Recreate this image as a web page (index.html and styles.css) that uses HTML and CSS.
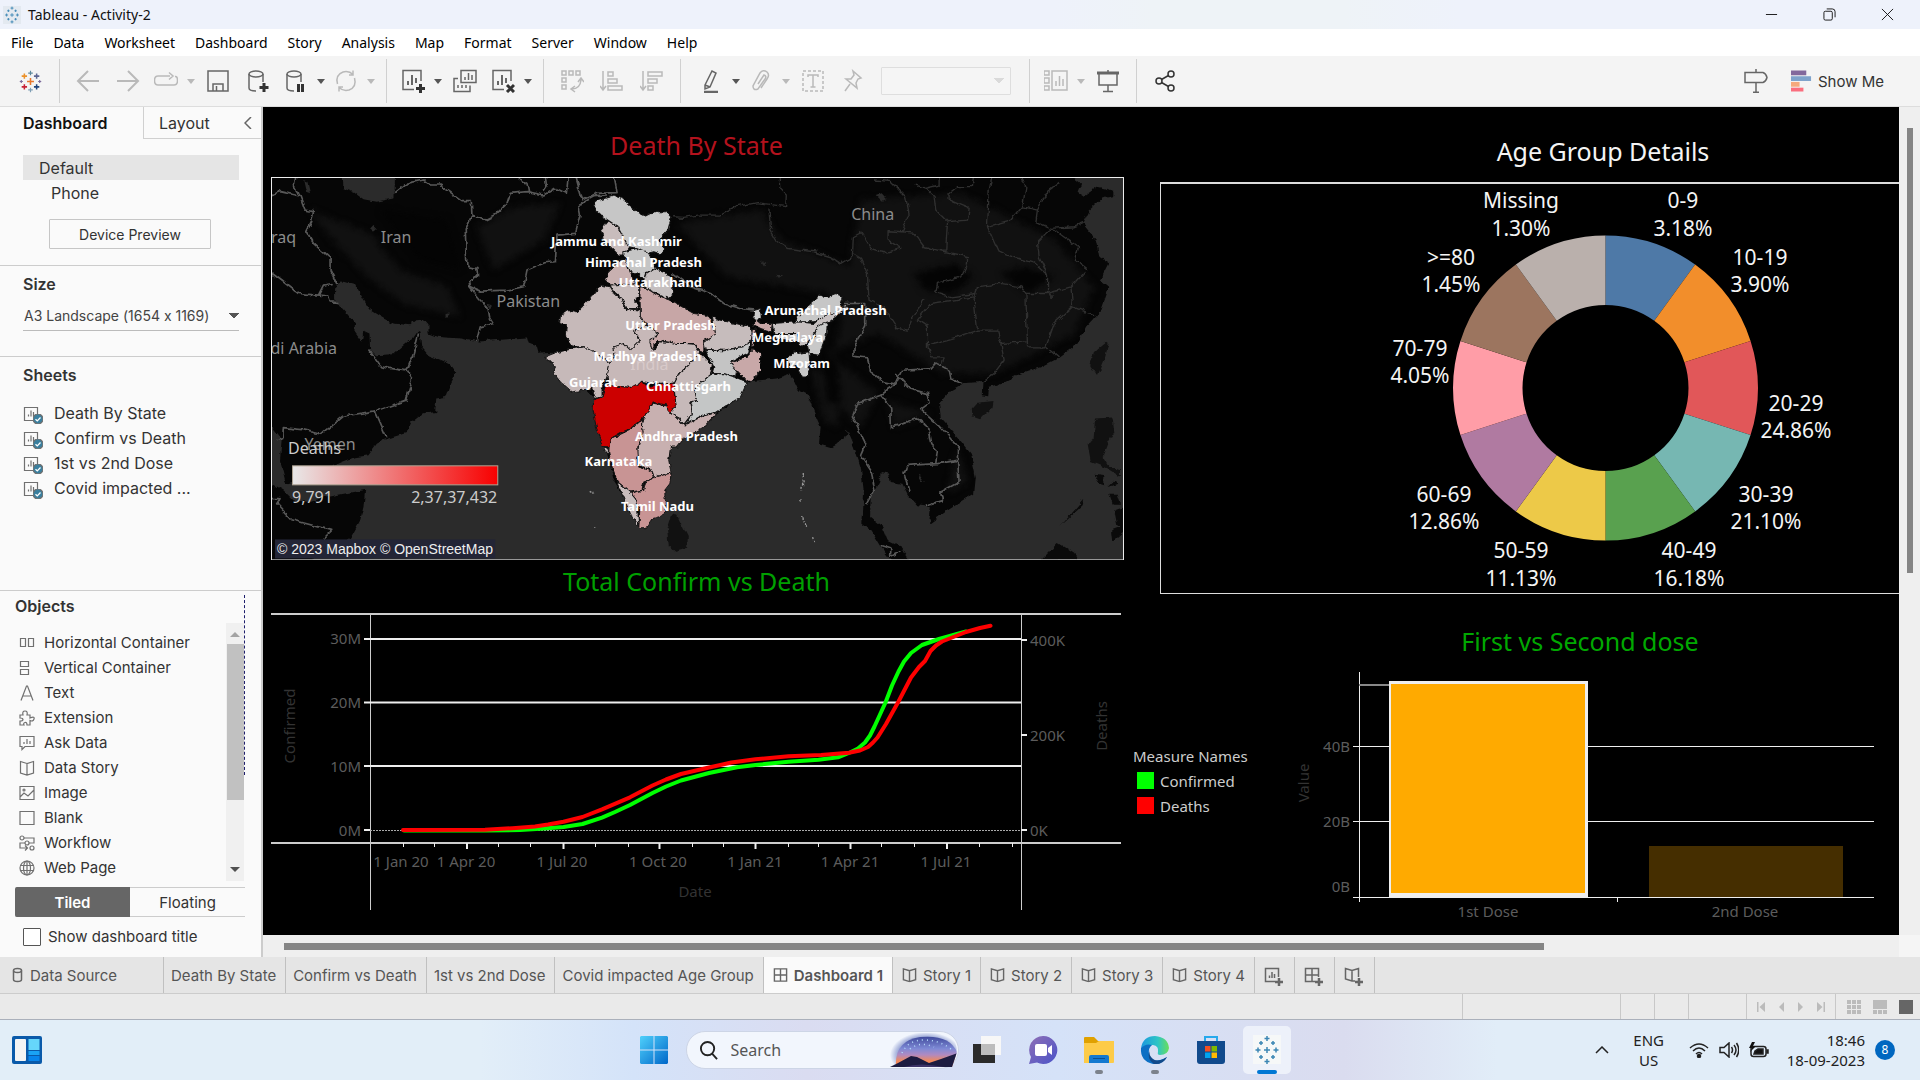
FILE: index.html
```html
<!DOCTYPE html>
<html lang="en">
<head>
<meta charset="utf-8">
<title>Tableau - Activity-2</title>
<link rel="stylesheet" href="styles.css">
</head>
<body>
<svg class="defs" aria-hidden="true">
  <defs>
    <symbol id="plusmark" viewBox="0 0 30 30"><path d="M15 12v6M12 15h6M15 1v5M12.500 3.500h5M15 24v5M12.500 26.500h5M6 12.500v5M3.500 15h5M24 12.500v5M21.500 15h5M9 6v4M7 8h4M21 6v4M19 8h4M9 20v4M7 22h4M21 20v4M19 22h4"/></symbol>
    <symbol id="book" viewBox="0 0 16 16"><path d="M8 3.500v11M8 3.500L1.500 1.500v11.500L8 15l6.500-2V1.500z"/></symbol>
    <symbol id="check" viewBox="0 0 10 10"><circle cx="5" cy="5" r="5" fill="#3a7f9e"/><path d="M2.500 5.200l1.800 1.700L7.500 3.500" fill="none" stroke="#fff" stroke-width="1.300"/></symbol>
  </defs>
</svg>

<header class="titlebar">
  <svg class="app-logo" viewBox="0 0 30 30"><rect width="30" height="30" fill="#e3e9f0"/><use href="#plusmark"/></svg>
  <h1>Tableau - Activity-2</h1>
  <div class="window-buttons">
    <button aria-label="Minimize"><svg viewBox="0 0 14 14"><path d="M1 7h12"/></svg></button>
    <button aria-label="Restore"><svg viewBox="0 0 14 14"><rect x="1" y="3.500" width="9" height="9.500" rx="1.500"/><path d="M4 1h6q3 0 3 3v6"/></svg></button>
    <button aria-label="Close"><svg viewBox="0 0 14 14"><path d="M1 1l12 12M13 1L1 13"/></svg></button>
  </div>
</header>

<nav class="menubar">
  <button>File</button><button>Data</button><button>Worksheet</button><button>Dashboard</button><button>Story</button><button>Analysis</button><button>Map</button><button>Format</button><button>Server</button><button>Window</button><button>Help</button>
</nav>

<div class="toolbar">
  <div class="tools home">
    <button aria-label="Start page"><svg class="color-logo" viewBox="0 0 30 30"><path stroke="#e8762c" stroke-width="2" d="M15 10.500v9M10.500 15h9"/><path stroke="#5b879b" d="M15 1v6M12 4h6"/><path stroke="#7f9fb5" d="M15 23v6M12 26h6"/><path stroke="#eb9129" stroke-width="2" d="M7 4.500v7M3.500 8h7"/><path stroke="#5c6692" stroke-width="2" d="M23 4.500v7M19.500 8h7"/><path stroke="#c72035" stroke-width="2" d="M7 18.500v7M3.500 22h7"/><path stroke="#1f447e" stroke-width="2" d="M23 18.500v7M19.500 22h7"/><path stroke="#7b6a9b" d="M3 13v4M1 15h4M27 13v4M25 15h4"/></svg></button>
  </div>
  <div class="tools">
    <button class="off" aria-label="Undo"><svg viewBox="0 0 24 24"><path stroke-width="2" d="M23 12H3M12 2L2 12l10 10"/></svg></button>
    <button class="off" aria-label="Redo"><svg viewBox="0 0 24 24"><path stroke-width="2" d="M1 12h20M12 2l10 10-10 10"/></svg></button>
    <button class="off drop" aria-label="Replay"><svg viewBox="0 0 24 24"><path d="M16 7H4q-3.500 0-3.500 4.500T4 16h16q3.500 0 3.500-4.500T21 7.500M15 3.500L19 7l-4 3.500"/></svg></button>
    <button aria-label="Save"><svg viewBox="0 0 24 24"><path stroke-width="1.500" d="M2 2h20v20H2zM7 22v-7h10v7M10.500 17v5"/></svg></button>
    <button aria-label="New data source"><svg viewBox="0 0 24 24"><ellipse cx="10" cy="5" rx="7" ry="3"/><path d="M3 5v14q0 3 7 3M17 5v8"/><path class="bold" d="M18 14v9M13.500 18.500h9"/></svg></button>
    <button class="drop" aria-label="Pause updates"><svg viewBox="0 0 24 24"><ellipse cx="10" cy="5" rx="7" ry="3"/><path d="M3 5v14q0 3 7 3M17 5v8"/><path class="bold" d="M14.500 15v8M18.500 15v8"/></svg></button>
    <button class="off drop" aria-label="Refresh"><svg viewBox="0 0 24 24"><path d="M3.500 15Q1 6 9 3q6-1.500 10 2.500M20.500 9q2.500 9-5.500 12-6 1.500-10-2.500M19 1.500v4.500h-4M5 22.500V18h4"/></svg></button>
  </div>
  <div class="tools">
    <button class="drop" aria-label="New worksheet"><svg viewBox="0 0 24 24"><path d="M13 20.500H2v-19h18V12"/><path stroke-width="2" d="M7 16v-4M11 16V6M15 14V9"/><path class="bold" d="M19.500 15v9M15 19.500h9"/></svg></button>
    <button aria-label="Duplicate"><svg viewBox="0 0 24 24"><path d="M8 1.500h15v12H8zM5 9.500H1v13h16v-6"/><path d="M12 11V8M15.500 11V4M19 11V6M5 19v-3M9 19v-3M13 19v-3"/></svg></button>
    <button class="drop" aria-label="Clear sheet"><svg viewBox="0 0 24 24"><path d="M13 20.500H2v-19h18V12"/><path stroke-width="2" d="M7 16v-4M11 16V6M15 14V9"/><path class="bold" d="M16 16l7 7M23 16l-7 7"/></svg></button>
  </div>
  <div class="tools">
    <button class="off" aria-label="Swap"><svg viewBox="0 0 24 24"><path d="M2 2h4v4H2zM9 2h4v4H9zM16 2h4v4h-4zM2 9h4v4H2zM2 16h4v4H2zM12 20q8 0 9-9M15 17l-4 3 4 3M18 13l3-4 3 4"/></svg></button>
    <button class="off" aria-label="Sort ascending"><svg viewBox="0 0 24 24"><path d="M3 2v19M0 17l3 4 3-4M8 3h5v4H8zM8 10h9v4H8zM8 17h14v4H8z"/></svg></button>
    <button class="off" aria-label="Sort descending"><svg viewBox="0 0 24 24"><path d="M3 2v19M0 17l3 4 3-4M8 3h14v4H8zM8 10h9v4H8zM8 17h5v4H8z"/></svg></button>
  </div>
  <div class="tools wide">
    <button class="drop" aria-label="Highlight"><svg viewBox="0 0 24 24"><path d="M6 16L13 2l4 2-6 14-5 2zM6 16l5 2"/><path stroke-width="2.500" d="M5 23h14"/></svg></button>
    <button class="off drop" aria-label="Group"><svg viewBox="0 0 24 24"><path d="M9 15l6-9q3 1 1 4l-7 10q-5 2-5-3L11 4q3-4 7-1 3 3 0 7l-6 9"/></svg></button>
    <button class="off" aria-label="Labels"><svg viewBox="0 0 24 24"><path stroke-dasharray="3 2" d="M2 2h20v20H2z"/><path d="M7 8V6h10v2M12 6v12M9.500 18h5"/></svg></button>
    <button class="off" aria-label="Fix axes"><svg viewBox="0 0 24 24"><path d="M12 2l8 7-3 1-2 4 1 5L5 10l5 0 3-4zM9 15l-5 7"/></svg></button>
    <select aria-label="Fit" disabled><option></option></select>
  </div>
  <div class="tools">
    <button class="off drop" aria-label="Show cards"><svg viewBox="0 0 24 24"><path d="M0 2h5v4H0zM0 9h5v5H0zM0 17h5v4H0zM8 2h15v19H8zM12 17v-5M15.500 17V7M19 17v-7"/></svg></button>
    <button aria-label="Presentation mode"><svg viewBox="0 0 24 24"><path stroke-width="3" d="M1 4h22"/><path stroke-width="1.500" d="M3 5v11h18V5M12 16v6M12 1v2M7 22.500h10"/></svg></button>
  </div>
  <div class="tools">
    <button class="strong" aria-label="Share"><svg viewBox="0 0 24 24"><circle cx="6" cy="12" r="3"/><circle cx="18" cy="5" r="3"/><circle cx="18" cy="19" r="3"/><path d="M8.500 10.500l7-4M8.500 13.500l7 4"/></svg></button>
  </div>
  <div class="tools end">
    <button aria-label="Guide"><svg viewBox="0 0 24 24"><path stroke-width="1.500" d="M1 3.500h18q3 1 4 5-1 4-4 5H1zM12 0v3M12 14v9M9 23.200h6"/></svg></button>
    <button class="showme"><svg viewBox="0 0 22 24"><path fill="#83699c" d="M0 1h16v5H0z"/><path fill="#7fa3cb" d="M0 7h21v5H0z"/><path fill="#f5a97d" d="M0 13h9v5H0z"/><path fill="#fa6e7e" d="M0 19h13v4H0z"/></svg>Show Me</button>
  </div>
</div>

<main>
  <aside>
    <div class="pane-tabs">
      <button class="on">Dashboard</button>
      <button>Layout<svg viewBox="0 0 8 12"><path d="M7 0L1 6l6 6"/></svg></button>
    </div>
    <section class="devices">
      <button class="device on">Default</button>
      <button class="device sub">Phone</button>
      <button class="preview">Device Preview</button>
    </section>
    <section class="size">
      <h2><label for="size">Size</label></h2>
      <div class="picker"><select id="size"><option>A3 Landscape (1654 x 1169)</option></select></div>
    </section>
    <section class="sheets">
      <h2>Sheets</h2>
      <ul>
        <li><svg viewBox="0 0 20 18"><path d="M11 14.500H1.500v-13h13V9M5.500 10.500v-2M8 10.500V4.500M10.500 10.500V6"/><use href="#check" x="10" y="8" width="10" height="10"/></svg>Death By State</li>
        <li><svg viewBox="0 0 20 18"><path d="M11 14.500H1.500v-13h13V9M5.500 10.500v-2M8 10.500V4.500M10.500 10.500V6"/><use href="#check" x="10" y="8" width="10" height="10"/></svg>Confirm vs Death</li>
        <li><svg viewBox="0 0 20 18"><path d="M11 14.500H1.500v-13h13V9M5.500 10.500v-2M8 10.500V4.500M10.500 10.500V6"/><use href="#check" x="10" y="8" width="10" height="10"/></svg>1st vs 2nd Dose</li>
        <li><svg viewBox="0 0 20 18"><path d="M11 14.500H1.500v-13h13V9M5.500 10.500v-2M8 10.500V4.500M10.500 10.500V6"/><use href="#check" x="10" y="8" width="10" height="10"/></svg>Covid impacted ...</li>
      </ul>
    </section>
    <section class="objects">
      <h2>Objects</h2>
      <div class="object-list">
        <ul>
          <li><svg viewBox="0 0 16 16"><path d="M1.500 3.500h5v8h-5zM9.500 3.500h5v8h-5z"/></svg>Horizontal Container</li>
          <li><svg viewBox="0 0 16 16"><path d="M1.500 1.500h8v5h-8zM1.500 9.500h8v5h-8z"/></svg>Vertical Container</li>
          <li><svg viewBox="0 0 16 16"><path d="M2 15.500L7.500 1h1L14 15.500M4 11h8"/></svg>Text</li>
          <li><svg viewBox="0 0 16 16"><path d="M1 5h3q-1-4 2-4t2 4h3v3q5-2 4 1t-4 1.500V15H8q0-3-2-2.500T5 15H1v-4q3 0 3-1.500T1 8z"/></svg>Extension</li>
          <li><svg viewBox="0 0 16 16"><path d="M1 1.500h14v10H6l-3 3v-3H1zM5 9V7M8 9V4M11 9V6"/></svg>Ask Data</li>
          <li><svg viewBox="0 0 16 16"><use href="#book"/></svg>Data Story</li>
          <li><svg viewBox="0 0 16 16"><path d="M1 1.500h14v13H1zM1 12l4-4 4 3 6-6"/><circle cx="5" cy="5" r="1"/></svg>Image</li>
          <li><svg viewBox="0 0 16 16"><path d="M1 1.500h14v13H1z"/></svg>Blank</li>
          <li><svg viewBox="0 0 16 16"><circle cx="3" cy="3" r="2"/><circle cx="8" cy="8" r="2"/><circle cx="13" cy="13" r="2"/><path d="M5 3h10v5h-5M6 8H1v5h7M6 10.500l2.500 2.500L6 15.500"/></svg>Workflow</li>
          <li><svg viewBox="0 0 16 16"><circle cx="8" cy="8" r="7"/><ellipse cx="8" cy="8" rx="3.500" ry="7"/><path d="M8 1v14M1.500 5.500h13M1.500 10.500h13"/></svg>Web Page</li>
        </ul>
        <div class="list-scroll"><svg viewBox="0 0 10 5"><path fill="#a3a3a3" d="M0 5l5-5 5 5z"/></svg><div class="list-thumb"></div><svg viewBox="0 0 10 5"><path fill="#505050" d="M0 0l5 5 5-5z"/></svg></div>
        <div class="outline"></div>
      </div>
      <div class="mode"><button class="on">Tiled</button><button>Floating</button></div>
      <div class="show-title"><input type="checkbox" id="show-title"><label for="show-title">Show dashboard title</label></div>
    </section>
  </aside>

  <div class="workspace">
    <div class="canvas">
      <div class="column left">
        <h2 class="map-title">Death By State</h2>
        <svg class="map" viewBox="271 177 852 383">
          <defs>
            <filter id="rough" x="0" y="0" width="1" height="1" color-interpolation-filters="sRGB"><feTurbulence type="fractalNoise" baseFrequency="0.04" numOctaves="3" seed="4"/><feDisplacementMap in="SourceGraphic" scale="16" xChannelSelector="R" yChannelSelector="G"/></filter>
            <filter id="rough-fine" x="-0.05" y="-0.05" width="1.100" height="1.100" color-interpolation-filters="sRGB"><feTurbulence type="fractalNoise" baseFrequency="0.070" numOctaves="3" seed="8"/><feDisplacementMap in="SourceGraphic" scale="14" xChannelSelector="R" yChannelSelector="G"/></filter>
            <filter id="haze" color-interpolation-filters="sRGB"><feGaussianBlur stdDeviation="10"/></filter>
            <linearGradient id="deaths"><stop offset="0" stop-color="#e8e8e8"/><stop offset="1" stop-color="#f80000"/></linearGradient>
          </defs>
          <svg x="271" y="177" width="852" height="383" viewBox="33 51 2556 1149">
            <rect x="33" y="51" width="2556" height="1149" fill="#2b2b2b"/>
            <g filter="url(#rough)">
              <rect x="13" y="31" width="2596" height="1189" fill="none"/>
              <path fill="#060606" d="M20 30L20 780 65 840 60 900 78 970 150 950 243 905 275 893 325 885 350 850 372 838 438 818 450 790 485 762 525 755 528 715 555 710 570 670 588 635 570 612 550 602 505 585 483 560 478 515 472 512 460 530 430 555 400 582 345 585 330 570 328 520 310 512 305 545 283 515 285 490 260 460 225 420 225 385 250 362 285 372 310 418 330 450 370 475 400 490 450 495 470 480 490 478 505 495 505 520 530 530 600 535 645 545 700 540 800 532 805 550 830 560 835 578 870 575 1000 715 1060 960 1145 1095 1205 1050 1228 870 1300 800 1400 740 1445 665 1545 655 1590 640 1610 685 1640 700 1660 755 1680 800 1675 850 1710 860 1752 835 1758 810 1780 860 1800 920 1810 1000 1805 1090 1830 1110 1860 1160 1900 1210 1955 1210 1920 1160 1880 1140 1865 1100 1828 1070 1830 1010 1855 970 1860 935 1885 940 1890 965 1925 970 1940 1000 1970 1035 2010 1040 2005 1090 2060 1050 2100 1025 2140 1000 2145 950 2130 880 2090 830 2040 775 2035 730 2070 690 2110 668 2165 665 2163 705 2182 708 2185 680 2230 665 2280 640 2340 620 2390 595 2450 550 2475 500 2520 450 2545 380 2520 360 2545 310 2515 290 2505 240 2465 190 2485 150 2525 115 2560 108 2560 92 2510 80 2470 108 2450 95 2460 70 2410 30z"/>
              <path fill="#060606" d="M20 960L70 990 100 1020 150 1025 200 1010 315 988 310 1040 300 1080 270 1135 130 1215 20 1215z"/>
              <path fill="#111" filter="url(#haze)" d="M150 150L330 220 420 330 560 380 600 470 430 430 320 350 200 220zM650 200L760 140 900 130 850 240 700 330zM1250 190L1500 150 1560 240 1800 330 1830 480 1700 400 1400 350zM1800 120L2100 100 2380 240 2500 380 2440 520 2200 640 2050 640 1850 520 1700 580 1850 700 1800 800 1700 700 1720 600zM1650 620L1740 660 1730 800 1690 780zM1880 720L2010 760 1900 800zM2090 860L2120 960 2060 1000z"/>
              <path fill="#040404" filter="url(#haze)" d="M1960 340L2080 310 2140 350 2080 400 1990 390zM2220 340L2300 320 2380 350 2300 400zM360 150L560 180 600 330 480 300zM1690 600l40 10 10 120-40 0z"/>
              <path fill="#111" d="M1235 1062L1250 1065 1282 1130 1280 1165 1245 1175 1225 1155 1220 1110zM2130 745L2145 728 2198 722 2195 740 2160 778 2132 768zM2535 545L2543 550 2530 600 2510 650 2488 615 2500 575zM2502 775L2555 772 2560 815 2540 850 2525 890 2540 915 2580 930 2580 950 2540 925 2490 905 2480 850 2498 840z"/>
              <path fill="#0a0a0a" d="M2470 1015L2465 1035 2398 1098 2440 1050zM2340 1200L2390 1148 2440 1180 2450 1200zM2500 940l30 5 0 30-15-5zM2545 1000l25 0 10 30-25 0zM2560 1050l29-10v60l-20-5zM2550 1110l39-15v20l-35 30zM2540 980l20 -20 10 10z"/>
              <path fill="#2b2b2b" d="M247 30H405L403 115 350 125 310 118 280 95 250 85zM130 60l12 5 8 35-12-5zM330 205l10-10 10 10-10 8zM556 460l12-4-2 16-10 0zM680 430l18 5-10 10zM1845 105l15-5 18 20-12 5zM1500 300l10 8 8 0-8 8zM1548 342l20 0-16 10zM2360 395l12 10 8 0-8 15-10-12zM1970 940l8 4 14 20-6 0z"/>
              <g class="borders">
                <path d="M105 40L100 75 115 95 135 150 160 155 155 185 140 215 160 250 210 295 210 330 232 375M30 105L60 95 118 108M30 335L115 400 175 405 190 375 218 370M175 405L205 408 210 425 235 427M405 98L440 70 490 60 510 75 540 75 575 100 605 122 633 122 635 165 615 210 620 318 650 325 652 345 625 378 660 393 740 390 790 380 800 330 850 308 885 305 890 225 945 220 960 160 955 135 1000 110 1040 108M635 165L675 180 705 165 740 130 750 100 800 95 850 105 885 85 918 100 925 40M765 45L800 70 805 95M855 45L858 75 845 95M945 45L965 120 1010 100 1070 98 1060 45M625 378L655 415 680 440 685 470 697 490 660 500 648 545M325 568L362 620 440 632 458 655 438 720 345 752 250 768 185 822 125 808 70 802 68 835 50 840M345 752L380 832M440 632L460 580 475 520M30 1015L60 1015 50 1030 95 1078 215 1110 190 1135"/>
                <g transform="translate(1140)">
                  <path d="M610 430L675 430 675 500 640 560 640 585 680 590 690 635 730 665 765 672 785 630 870 625 885 608 925 630 930 655 965 668M765 640L805 685 860 700 868 725 840 745 900 800 950 860 950 900 890 910 800 915 790 940 805 995M765 672L720 705 650 730 635 770 660 820 675 850 660 885 690 930 702 985 675 1035M720 705L750 740 752 800 790 790 830 775 860 800 870 850 890 870 885 910M950 900L955 965 900 995 905 1020 855 1035M720 1155L750 1165 750 1185 780 1170M95 340L150 380 210 400 250 430 300 445 345 450"/>
                  <path class="province" d="M415 45L418 85 437 105 435 140 350 128 290 140 240 165 170 165 130 172 95 170M385 145L390 210 410 245 440 265 520 275 570 290 600 310 635 290 638 230 660 218 690 265 730 278 780 265 742 240 742 212 785 215 805 160 795 110 750 65 700 60M635 280L660 295 680 340 685 420 730 445 770 505 800 510 815 470 850 420M785 215L820 220 850 260 890 270 915 270 920 185 885 150 880 110 855 85 825 75M855 85L895 75 895 45M920 185L980 180 985 145 925 120 925 100 950 80 995 80 998 45M1055 45L1045 90 1040 200 1070 270 1100 285 1180 310 1220 345 1220 400 1155 400 1140 380 1080 370 1010 380 1005 400 930 410 885 395 890 370 960 350 980 310 980 290 890 270M1040 200L1110 180 1145 140 1155 80 1140 45M1145 140L1190 150 1215 100 1255 70M1190 150L1185 185 1230 205 1300 200 1325 190M1230 205L1190 245 1195 290 1220 345M1240 210L1310 260 1300 300 1340 330M1220 400L1290 380 1330 335M1290 380L1295 440 1360 465M1295 440L1240 490 1215 560 1250 590M1155 400L1160 560 1215 560M1010 380L1000 420 1010 510 1070 510 1080 550 1155 545M1010 510L950 530 860 555 860 500 830 480 870 430 1000 410M860 555L870 590 910 590 905 610M1080 550L1090 600 1060 640 1025 665"/>
                </g>
              </g>
              <path class="isles" d="M1628 935v20M1628 960l-5 30M1618 1020v8M1626 1070l12 30M1656 1130l4 15M988 990l16 10M1004 1100h4"/>
            </g>
            <g class="states" filter="url(#rough-fine)" transform="translate(810 60)">
              <path fill="#c8bcbc" d="M235 122L212 150 220 180 240 200 265 225 280 225 295 200 262 140z"/>
              <path fill="#c6c6c6" d="M187 75L200 62 250 48 275 55 320 95 345 108 370 95 410 95 423 110 412 150 385 180 400 210 390 222 370 215 350 220 320 205 295 200 275 165 262 140 235 122 210 105 195 92z"/>
              <path fill="#c5c5c5" d="M280 215L320 205 350 215 370 245 375 270 345 280 340 300 320 280 285 270z"/>
              <path fill="#c8b0b0" d="M235 275L270 240 285 240 300 275 310 300 320 315 240 315 225 305z"/>
              <path fill="#c5bfbf" d="M345 285L375 265 400 275 430 300 425 345 415 355 345 325 340 300z"/>
              <path fill="#c7bbbb" d="M240 315L325 310 325 345 315 360 325 385 290 385 270 350 245 330z"/>
              <path fill="#c6b9b9" d="M210 315L240 320 255 345 275 355 285 385 330 390 335 410 345 435 310 455 330 480 320 510 290 520 280 495 250 500 255 530 240 550 195 520 165 500 130 500 105 465 108 435 88 430 90 405 115 388 140 395 180 355z"/>
              <path fill="#c6b9b9" d="M45 530L75 518 130 505 165 500 200 520 240 550 230 590 215 620 215 650 195 655 185 625 125 635 90 605 70 580 75 560z"/>
              <path fill="#c7b8b8" d="M250 500L280 490 300 510 330 480 310 455 345 435 385 460 360 490 370 510 385 485 440 488 490 492 505 515 480 550 445 580 430 610 390 612 330 603 315 622 235 618 230 590 240 545 255 530z"/>
              <path fill="#c7a6a6" d="M328 320L345 322 380 345 420 360 490 400 530 405 545 425 558 465 520 480 520 520 505 510 490 490 440 490 380 480 365 510 358 485 385 460 350 435 330 410z"/>
              <path fill="#c6bcbc" d="M545 405L560 418 660 440 670 465 655 490 630 500 580 510 525 508 520 485 555 462z"/>
              <path fill="#c4c4c4" d="M525 510L580 512 635 500 658 485 655 515 600 545 620 560 615 590 575 580 545 580 550 560z"/>
              <path fill="#c8a8a8" d="M655 520L670 505 690 520 690 570 660 605 635 590 610 565 600 548 640 535zM672 415L690 430 725 430 722 455 690 445 672 435zM665 445l10 0-8 55-5 0z"/>
              <path fill="#ccc" d="M672 390L690 385 692 415 670 418z"/>
              <path fill="#c4c6c6" d="M540 583L575 580 610 590 650 605 630 650 590 675 560 695 515 705 480 725 465 730 485 700 480 670 498 660 490 630 520 600z"/>
              <path fill="#c6b9b9" d="M505 515L545 555 540 583 520 600 490 630 498 660 478 665 485 700 460 732 440 710 418 695 435 660 430 610 445 580 480 550z"/>
              <path fill="#c8b0b0" d="M365 668L410 677 418 695 440 712 462 735 515 708 560 697 520 740 460 775 440 800 420 800 415 840 422 878 370 890 365 870 325 855 320 820 330 770 340 715z"/>
              <path fill="#c89494" d="M335 718L338 760 322 800 325 860 365 872 370 895 340 905 335 930 300 935 262 905 245 860 235 820 237 778 300 748z"/>
              <path fill="#c00" d="M190 658L215 650 225 615 300 622 335 603 350 618 430 608 432 645 438 680 425 685 422 700 412 690 410 675 365 665 350 700 335 715 300 745 275 755 240 775 235 800 215 798 200 750 188 690z"/>
              <path fill="#c8bcbc" d="M258 903L300 935 320 960 325 1040 300 1000zM222 803L235 803 232 825z"/>
              <path fill="#c89494" d="M300 938L340 930 345 905 375 890 422 878 418 910 403 930 405 980 400 1005 365 1015 345 1045 325 1045 328 990 315 955z"/>
              <path fill="#c6c0c0" d="M725 430L800 425 850 430 890 395 950 375 950 385 890 430 860 440 845 475 820 500 805 490 800 460 730 460z"/>
              <path fill="#c6c6c6" d="M795 418L835 375 870 345 890 350 915 340 938 350 930 375 955 385 920 395 890 405 850 425 800 425z"/>
              <path fill="#c8c8c8" d="M860 440L890 425 888 460 865 525 835 520 830 490 850 470zM770 535L790 515 805 520 835 515 838 555 830 590 815 590 800 555 775 560zM735 460L800 460 805 485 740 480z"/>
            </g>
          </svg>
          <g class="countries">
            <text x="296" y="243" text-anchor="end">Iraq</text><text x="396" y="243">Iran</text><text x="528" y="307">Pakistan</text><text x="337" y="354" text-anchor="end">Saudi Arabia</text><text x="330" y="450">Yemen</text><text x="872" y="220">China</text><text class="faint" x="649" y="370">India</text>
          </g>
          <g class="state-names">
            <text x="616" y="246">Jammu and Kashmir</text><text x="643" y="267">Himachal Pradesh</text><text x="660" y="287">Uttarakhand</text><text x="670" y="330">Uttar Pradesh</text><text x="647" y="361">Madhya Pradesh</text><text x="593" y="387">Gujarat</text><text x="688" y="391">Chhattisgarh</text><text x="686" y="441">Andhra Pradesh</text><text x="618" y="466">Karnataka</text><text x="657" y="511">Tamil Nadu</text><text x="825" y="315">Arunachal Pradesh</text><text x="787" y="342">Meghalaya</text><text x="801" y="368">Mizoram</text>
          </g>
          <g class="map-legend">
            <text x="288" y="454">Deaths</text>
            <rect x="292.500" y="465.500" width="205" height="19" fill="url(#deaths)" stroke="#b0a493"/>
            <text x="292" y="503">9,791</text><text x="497" y="503" text-anchor="end">2,37,37,432</text>
          </g>
          <rect x="275" y="539" width="220" height="19" fill="#232536"/>
          <text class="credit" x="277" y="554">© 2023 Mapbox © OpenStreetMap</text>
          <rect x="271.500" y="177.500" width="851" height="382" fill="none" stroke="#eee"/>
        </svg>
        <h2 class="line-title">Total Confirm vs Death</h2>
        <svg class="chart" viewBox="271 613 853 300">
          <g class="frame"><path class="two" d="M270 614H1121M270 843H1121"/><path d="M370.500 614V910M1021.500 614V910"/></g>
          <path class="grid" d="M364 639H1021M364 702.500H1021M364 766H1021"/>
          <path class="zero" d="M364 830.500H1021"/>
          <path class="ticks" d="M364 830h6M1021 640h6M1021 735h6M1021 830h6M467 843v6M563.500 843v6M659.500 843v6M755.500 843v6M850.500 843v6M947 843v6"/>
          <path class="minor" d="M403.500 843v4M434.500 843v4M498.500 843v4M530.500 843v4M595.500 843v4M628.500 843v4M692.500 843v4M723.500 843v4M788.500 843v4M818.500 843v4M881.500 843v4M914.500 843v4M979.500 843v4M1012.500 843v4"/>
          <path class="series" stroke="#0f0" d="M404 830.500L485 830.500 520 830 540.500 828.700 563.500 827 582.500 824 602 817.700 615 812 630 805 652.500 793 666 786.500 681 780.500 709 773 737 767.300 755.500 765 788.500 761.700 818.500 759.700 838 757.300 850 752.500 858 748.500 865 742.500 870 735.500 874.500 726.500 880 714.500 885.500 702.500 892 685.500 898.500 671.500 904 661.500 911 653 922 645 939 639 966 631.500"/>
          <path class="series" stroke="red" d="M403 830L485 829.700 512.500 828.200 535 826.500 548 824.500 563.500 821.700 582.500 817 602 809.300 630 797.300 652.500 785.500 666 779.500 681 774 709 767.500 731.500 762.500 755.500 759.300 788.500 756.300 821 755 849 752.700 860 750.500 868 747 873 742.500 877.500 737.500 886 724 898.500 701.500 911 677.500 919 667 925 661 930.500 651 936 645.500 942 641.500 966 632 980 628 990.500 625.700"/>
          <g class="axis end"><text x="361" y="644">30M</text><text x="361" y="708">20M</text><text x="361" y="772">10M</text><text x="361" y="836">0M</text></g>
          <g class="axis"><text x="1030" y="646">400K</text><text x="1030" y="741">200K</text><text x="1030" y="836">0K</text></g>
          <g class="axis mid"><text x="401" y="867">1 Jan 20</text><text x="466" y="867">1 Apr 20</text><text x="562" y="867">1 Jul 20</text><text x="658" y="867">1 Oct 20</text><text x="755" y="867">1 Jan 21</text><text x="850" y="867">1 Apr 21</text><text x="946" y="867">1 Jul 21</text></g>
          <g class="axis mid dim"><text x="695" y="897">Date</text><text transform="translate(295 726) rotate(-90)">Confirmed</text><text transform="translate(1107 726) rotate(-90)">Deaths</text></g>
        </svg>
      </div>

      <div class="column right">
        <h2 class="age-title">Age Group Details</h2>
        <div class="age-box">
          <svg viewBox="1161 184 738 409">
            <g fill="none" stroke-width="69.500" transform="rotate(-90 1605.500 388)">
              <circle cx="1605.500" cy="388" r="117.750" stroke="#4e79a7" pathLength="100" stroke-dasharray="10 90"/>
              <circle cx="1605.500" cy="388" r="117.750" stroke="#f28e2b" pathLength="100" stroke-dasharray="10 90" stroke-dashoffset="-10"/>
              <circle cx="1605.500" cy="388" r="117.750" stroke="#e15759" pathLength="100" stroke-dasharray="10 90" stroke-dashoffset="-20"/>
              <circle cx="1605.500" cy="388" r="117.750" stroke="#76b7b2" pathLength="100" stroke-dasharray="10 90" stroke-dashoffset="-30"/>
              <circle cx="1605.500" cy="388" r="117.750" stroke="#59a14f" pathLength="100" stroke-dasharray="10 90" stroke-dashoffset="-40"/>
              <circle cx="1605.500" cy="388" r="117.750" stroke="#edc948" pathLength="100" stroke-dasharray="10 90" stroke-dashoffset="-50"/>
              <circle cx="1605.500" cy="388" r="117.750" stroke="#b07aa1" pathLength="100" stroke-dasharray="10 90" stroke-dashoffset="-60"/>
              <circle cx="1605.500" cy="388" r="117.750" stroke="#ff9da7" pathLength="100" stroke-dasharray="10 90" stroke-dashoffset="-70"/>
              <circle cx="1605.500" cy="388" r="117.750" stroke="#9c755f" pathLength="100" stroke-dasharray="10 90" stroke-dashoffset="-80"/>
              <circle cx="1605.500" cy="388" r="117.750" stroke="#bab0ac" pathLength="100" stroke-dasharray="10 90" stroke-dashoffset="-90"/>
            </g>
            <g class="slices">
              <text x="1521" y="208">Missing</text><text x="1521" y="236">1.30%</text>
              <text x="1683" y="208">0-9</text><text x="1683" y="236">3.18%</text>
              <text x="1451" y="265">&gt;=80</text><text x="1451" y="292">1.45%</text>
              <text x="1760" y="265">10-19</text><text x="1760" y="292">3.90%</text>
              <text x="1420" y="356">70-79</text><text x="1420" y="383">4.05%</text>
              <text x="1796" y="411">20-29</text><text x="1796" y="438">24.86%</text>
              <text x="1444" y="502">60-69</text><text x="1444" y="529">12.86%</text>
              <text x="1766" y="502">30-39</text><text x="1766" y="529">21.10%</text>
              <text x="1521" y="558">50-59</text><text x="1521" y="586">11.13%</text>
              <text x="1689" y="558">40-49</text><text x="1689" y="586">16.18%</text>
            </g>
          </svg>
        </div>
        <div class="dose">
          <div class="legend">
            <h3>Measure Names</h3>
            <p><i class="green"></i>Confirmed</p>
            <p><i class="red"></i>Deaths</p>
          </div>
          <div class="dose-chart">
            <h2 class="dose-title">First vs Second dose</h2>
            <svg class="chart" viewBox="1285 672 590 250">
              <path class="thin" d="M1359.500 672V902M1353 897.500H1874M1353 746.500H1874M1353 821.500H1874M1617.500 897v5"/>
              <path stroke="#888" stroke-width="2" d="M1359 685h31"/>
              <rect x="1389" y="681" width="199" height="217" fill="#eee"/>
              <rect x="1391" y="684" width="194" height="209" fill="#fa0"/>
              <rect x="1649" y="846" width="194" height="51" fill="#452e00"/>
              <g class="axis end"><text x="1350" y="752">40B</text><text x="1350" y="827">20B</text><text x="1350" y="892">0B</text></g>
              <g class="axis mid"><text x="1488" y="917">1st Dose</text><text x="1745" y="917">2nd Dose</text></g>
              <g class="axis mid dim"><text transform="translate(1309 783) rotate(-90)">Value</text></g>
            </svg>
          </div>
        </div>
      </div>
    </div>
    <div class="vscroll"><div class="vthumb"></div></div>
    <div class="hscroll"><div class="hthumb"></div></div>
    <div class="corner"></div>
  </div>
</main>

<nav class="tabs">
  <button class="source"><svg viewBox="0 0 10 16"><ellipse cx="5" cy="3.500" rx="4" ry="2"/><path d="M1 3.500v9q0 2 4 2t4-2v-9"/></svg>Data Source</button>
  <button>Death By State</button>
  <button>Confirm vs Death</button>
  <button>1st vs 2nd Dose</button>
  <button>Covid impacted Age Group</button>
  <button class="icon on"><svg viewBox="0 0 16 16"><path d="M1.500 1.500h13v13h-13zM8 1.500v13M1.500 8h13"/></svg>Dashboard 1</button>
  <button class="icon"><svg viewBox="0 0 16 16"><use href="#book"/></svg>Story 1</button>
  <button class="icon"><svg viewBox="0 0 16 16"><use href="#book"/></svg>Story 2</button>
  <button class="icon"><svg viewBox="0 0 16 16"><use href="#book"/></svg>Story 3</button>
  <button class="icon"><svg viewBox="0 0 16 16"><use href="#book"/></svg>Story 4</button>
  <button class="add" aria-label="New worksheet"><svg viewBox="0 0 20 20"><path d="M11 14.500H1.500v-13h13V10M5.500 11V8.500M8 11V5M10.500 11V7"/><path class="bold" d="M15 11v8M11 15h8"/></svg></button>
  <button class="add" aria-label="New dashboard"><svg viewBox="0 0 20 20"><path d="M11 14.500H1.500v-13h13V10M8 1.500v13M1.500 8h13"/><path class="bold" d="M15 11v8M11 15h8"/></svg></button>
  <button class="add" aria-label="New story"><svg viewBox="0 0 20 20"><path d="M8 3.500v11M11 14H8L1.500 12V1.500L8 3.500l6.500-2V10"/><path class="bold" d="M15 11v8M11 15h8"/></svg></button>
</nav>

<footer class="status">
  <span class="s1"></span><span class="s2"></span><span class="s2"></span><span class="s3"></span>
  <div class="pager">
    <button aria-label="First"><svg viewBox="0 0 8 10"><path d="M0 0h1.500v10H0zM8 0v10L2.500 5z"/></svg></button>
    <button aria-label="Previous"><svg viewBox="0 0 8 10"><path d="M7 0v10L2 5z"/></svg></button>
    <button aria-label="Next"><svg viewBox="0 0 8 10"><path d="M1 0v10l5-5z"/></svg></button>
    <button aria-label="Last"><svg viewBox="0 0 8 10"><path d="M6.500 0H8v10H6.500zM0 0v10l5.500-5z"/></svg></button>
  </div>
  <div class="views">
    <button aria-label="Sheet sorter"><svg viewBox="0 0 14 14"><path fill="#bbb" d="M0 0h4v4H0zM5 0h4v4H5zM10 0h4v4h-4zM0 5h4v4H0zM5 5h4v4H5zM10 5h4v4h-4zM0 10h4v4H0zM5 10h4v4H5zM10 10h4v4h-4z"/></svg></button>
    <button aria-label="Filmstrip"><svg viewBox="0 0 14 14"><path fill="#bbb" d="M0 0h14v9H0zM0 10h4v4H0zM5 10h4v4H5zM10 10h4v4h-4z"/></svg></button>
    <button aria-label="Tabs"><svg viewBox="0 0 14 14"><path fill="#666" d="M0 0h14v14H0z"/></svg></button>
  </div>
</footer>

<div class="taskbar">
  <button class="widgets" aria-label="Widgets"><svg viewBox="0 0 30 28"><rect width="30" height="28" rx="2" fill="#0a5aaa"/><rect x="3" y="3" width="11" height="22" rx="1" fill="#f4f4f4"/><rect x="16.500" y="3" width="11" height="11" fill="#66d6fb"/><path fill="#1aa3f5" d="M16.500 15h11v4h-11z"/><path fill="#0885ec" d="M16.500 20h11v5h-11z"/></svg></button>
  <div class="apps">
    <button aria-label="Start"><svg viewBox="0 0 30 30"><defs><linearGradient id="win" x2="1" y2="1"><stop stop-color="#4fd0fb"/><stop offset="1" stop-color="#0067c9"/></linearGradient></defs><path fill="url(#win)" d="M2 1h12.500v13.500H1V2zM15.500 1H28l1 1v12.500H15.500zM1 15.500h13.500V29H2l-1-1zM15.500 15.500H29V28l-1 1H15.500z"/></svg></button>
    <div class="search">
      <svg class="lens" viewBox="0 0 20 20"><circle cx="9" cy="8" r="7"/><path d="M14 13.500l5 5.500"/></svg>
      <input type="text" placeholder="Search" aria-label="Search">
      <svg class="art" viewBox="0 0 68 34"><defs><linearGradient id="dusk" x2="0" y2="1"><stop stop-color="#3f4a9c"/><stop offset=".4" stop-color="#7f8ad6"/><stop offset=".6" stop-color="#b08ac0"/><stop offset=".8" stop-color="#f2895a"/></linearGradient><radialGradient id="orb"><stop offset=".6" stop-color="#5165b5"/><stop offset="1" stop-color="#5165b5" stop-opacity="0"/></radialGradient><clipPath id="pill"><path d="M0 0h49a17 17 0 0 1 17 22l-4 12H0z"/></clipPath></defs><g clip-path="url(#pill)"><ellipse cx="36" cy="22" rx="36" ry="23" fill="url(#orb)"/><path fill="url(#dusk)" d="M6 34Q4 8 30 4q32-3 38 18v12z"/><path fill="none" stroke="#b7dcfb" stroke-width="1.500" stroke-dasharray="1 4" d="M12 20Q18 7 34 7t28 10M20 16q10-8 24-2"/><path fill="#1d1c40" d="M0 34l8-4 13-7 6 1 12 6 12-4 17-6v14z"/><path fill="#3d3468" d="M14 34q16-5 40 0z"/></g></svg>
    </div>
    <button aria-label="Task view"><svg viewBox="0 0 30 30"><path fill="#2b2b2b" d="M1 9h22v19H1z"/><path fill="#f7f7f7" d="M9 1h20v19H9z"/><path fill="#bdbdbd" d="M9 9h14v11H9z"/></svg></button>
    <button aria-label="Chat"><svg viewBox="0 0 30 30"><defs><linearGradient id="chat" x2="1" y2="1"><stop stop-color="#8f6fb5"/><stop offset="1" stop-color="#4a53c9"/></linearGradient></defs><path fill="url(#chat)" d="M15 1a14 14 0 1 1-6 26.500L1 29l2-7A14 14 0 0 1 15 1z"/><rect x="7" y="9" width="12" height="12" rx="2" fill="#fff"/><path fill="#fff" d="M20 13l4-3v10l-4-3z"/></svg></button>
    <button class="running" aria-label="File Explorer"><svg viewBox="0 0 30 30"><path fill="#e0a100" d="M0 3q0-1 1-1h9l4 4h15v6H0z"/><path fill="#fdcb48" d="M0 8h12l3-2h15v21q0 1-1 1H0z"/><path fill="#1479d0" d="M5 28v-6q0-2 2-2h16q2 0 2 2v6z"/><path fill="#0b4f92" d="M9 23h12v1H9z"/></svg></button>
    <button class="running" aria-label="Edge"><svg viewBox="0 0 30 30"><defs><linearGradient id="edge" x2="1"><stop stop-color="#1b98df"/><stop offset=".6" stop-color="#2ec5c5"/><stop offset="1" stop-color="#6ade5a"/></linearGradient></defs><path fill="url(#edge)" d="M1 13Q3 1 15 1q13 1 14 12-1 7-9 7-3 0-2-3 1-6-5-7-7 0-12 3z"/><path fill="#0c6fc4" d="M1 13q5-5 11-3-4 3-3 9 2 8 11 6 4-1 7-3-5 8-14 7Q0 26 1 13z"/><path fill="#114a8b" d="M10 14q-2 6 3 10t14-2q-4 8-13 7Q6 24 10 14z"/></svg></button>
    <button aria-label="Microsoft Store"><svg viewBox="0 0 30 30"><path fill="none" stroke="#27a9ec" stroke-width="2" d="M9 6V2h12v4"/><path fill="#114a8c" d="M1 6h28v20q0 3-3 3H4q-3 0-3-3z"/><path fill="#f25022" d="M9 11h5.500v5.500H9z"/><path fill="#7fba00" d="M15.500 11H21v5.500h-5.500z"/><path fill="#00a4ef" d="M9 17.500h5.500V23H9z"/><path fill="#ffb900" d="M15.500 17.500H21V23h-5.500z"/></svg></button>
    <button class="active" aria-label="Tableau"><svg viewBox="0 0 30 30"><rect x="1" width="28" height="29" fill="#f6f8f8"/><use href="#plusmark"/></svg></button>
  </div>
  <div class="tray">
    <button aria-label="Hidden icons"><svg class="chev" viewBox="0 0 14 8"><path d="M1 7l6-6 6 6"/></svg></button>
    <div class="lang">ENG<br>US</div>
    <div class="tray-icons">
      <svg viewBox="0 0 20 16"><path d="M1 6q9-8 18 0M4 9q6-6 12 0M7 12q3-3 6 0"/><circle cx="10" cy="14" r="1.500" fill="#111"/></svg>
      <svg viewBox="0 0 20 16"><path d="M1 5.500h4L10 1v14l-5-4.500H1zM12.500 5q2 3 0 6M15 3q4 5 0 10M17.500 1q4.500 7 0 14"/></svg>
      <svg viewBox="0 0 20 16"><rect x="2" y="4.500" width="15" height="10" rx="2.500"/><path fill="#111" d="M5 12l1-3 3-2h5v5zM18 8h1v3h-1z"/><path fill="#111" stroke="none" d="M3 0L0 6h3L1 10l6-6H4l2-4z"/></svg>
    </div>
    <div class="clock"><time>18:46</time><br><time>18-09-2023</time></div>
    <span class="badge">8</span>
  </div>
</div>
</body>
</html>
```
FILE: styles.css
```css
* { box-sizing: border-box; }
html, body { height: 100%; }
body {
  margin: 0;
  display: flex;
  flex-direction: column;
  overflow: hidden;
  font-family: Inter, "Liberation Sans", sans-serif;
  font-size: 15px;
  font-feature-settings: "calt" 0;
  color: #333;
  background: #fff;
}
button {
  border: 0;
  padding: 0;
  margin: 0;
  background: none;
  font: inherit;
  color: inherit;
  white-space: nowrap;
}
h1, h2, h3, p, ul { margin: 0; padding: 0; font-weight: 400; }
ul { list-style: none; }
svg { display: block; flex: none; }
.defs { position: absolute; width: 0; height: 0; }
#plusmark { stroke: #3c86b4; stroke-width: 1.500; fill: none; }

/* Title bar and menu */
.titlebar {
  flex: none;
  height: 29px;
  display: flex;
  align-items: center;
  gap: 7px;
  padding: 0 4px 0 3px;
  background: linear-gradient(90deg, #eef2fb 55%, #eef3f7 60%, #eef3f7 70%, #eef2fb 76%);
}
.app-logo { width: 18px; height: 18px; }
.titlebar h1 { flex: 1; font: 14px/20px "Noto Sans", sans-serif; color: #111; }
.window-buttons { display: flex; }
.window-buttons button { width: 58px; display: flex; justify-content: center; }
.window-buttons svg { width: 13px; height: 13px; fill: none; stroke: #111; }
.menubar {
  flex: none;
  height: 27px;
  display: flex;
  align-items: center;
  gap: 20px;
  padding-left: 11px;
  font: 14px/20px "Noto Sans", sans-serif;
  color: #000;
}

/* Toolbar */
.toolbar {
  flex: none;
  height: 51px;
  display: flex;
  align-items: center;
  background: #f4f4f4;
  border-bottom: 1px solid #ddd;
}
.tools {
  height: 44px;
  display: flex;
  align-items: center;
  gap: 8px;
  padding: 0 12px;
  border-left: 1px solid #d0d0d0;
}
.tools.home { border: 0; padding: 0 13px 0 14px; }
.tools.wide { padding: 0 18px 0 16px; }
.tools.end { margin-left: auto; border: 0; gap: 19px; padding-right: 36px; }
.tools button { width: 32px; display: flex; justify-content: center; align-items: center; }
.tools svg { width: 24px; height: 24px; fill: none; stroke: #666; stroke-width: 1.500; }
.tools .off svg { stroke: #b9b9b9; }
.tools .strong svg { stroke: #333; }
.tools .bold { stroke: #333; stroke-width: 3; }
.tools button.drop { width: 42px; justify-content: flex-start; padding-left: 2px; }
.tools .drop::after {
  content: "";
  margin-left: 9px;
  border: 4px solid transparent;
  border-top: 5px solid #555;
  border-bottom: 0;
}
.tools .off.drop::after { border-top-color: #b9b9b9; }
.tools select {
  width: 130px;
  height: 28px;
  margin-left: 4px;
  border: 1px solid #d5d5d5;
  border-radius: 1px;
  appearance: none;
  background:
    linear-gradient(to bottom right, #d0d0d0 50%, transparent 50%) no-repeat right 6px center / 5px 6px,
    linear-gradient(to bottom left, #d0d0d0 50%, transparent 50%) no-repeat right 11px center / 5px 6px,
    #f6f6f6;
}
.tools .color-logo { width: 23px; height: 23px; }
.tools .showme { width: auto; gap: 6px; font-size: 15px; color: #333; }
.tools .showme svg { width: 21px; height: 24px; stroke: none; }

/* Side pane */
main { flex: 1; min-height: 0; display: flex; }
aside {
  flex: none;
  width: 263px;
  display: flex;
  flex-direction: column;
  background: #fafafa;
  border-right: 2px solid #ccc;
}
aside h2 { font-size: 16px; line-height: 20px; font-weight: 600; }
.pane-tabs { display: flex; font-size: 16px; }
.pane-tabs button { height: 32px; text-align: left; }
.pane-tabs .on { width: 143px; padding-left: 23px; font-weight: 600; color: #111; }
.pane-tabs button + button {
  flex: 1;
  display: flex;
  align-items: center;
  justify-content: space-between;
  padding: 0 9px 0 15px;
  border-left: 1px solid #d0d0d0;
  border-bottom: 1px solid #d0d0d0;
}
.pane-tabs svg { width: 8px; height: 12px; fill: none; stroke: #666; stroke-width: 1.500; }
aside section { border-bottom: 1px solid #ccc; padding: 8px 22px 0 23px; }
aside .devices { display: flex; flex-direction: column; height: 127px; padding-top: 16px; }
.device { height: 25px; text-align: left; padding-left: 16px; font-size: 16px; }
.device.on { background: #e5e5e5; }
.device.sub { padding-left: 28px; }
.preview { width: 162px; height: 30px; margin: 14px 0 0 26px; border: 1px solid #c6c6c6; border-radius: 1px; font-size: 14px; }
.size { height: 91px; }
.picker { display: flex; margin-top: 8px; border-bottom: 1px solid #bbb; }
.picker select {
  flex: 1;
  height: 28px;
  padding: 0 0 2px 1px;
  border: 0;
  appearance: none;
  font: inherit;
  font-size: 14px;
  color: #444;
  background:
    linear-gradient(to bottom right, #555 50%, transparent 50%) no-repeat right 0 top 11px / 5px 6px,
    linear-gradient(to bottom left, #555 50%, transparent 50%) no-repeat right 5px top 11px / 5px 6px;
}
.sheets { flex: 1; }
.sheets ul { margin-top: 15px; font-size: 16px; }
.sheets li { height: 25px; display: flex; align-items: center; gap: 11px; }
.sheets li svg { width: 20px; height: 18px; margin-top: 4px; }
aside li svg { fill: none; stroke: #707070; stroke-width: 1.200; }
aside .objects { height: 366px; padding: 5px 16px 0 15px; border: 0; }
.object-list { display: flex; margin-top: 7px; height: 258px; }
.object-list ul { flex: 1; padding-top: 7px; }
.object-list li { height: 25px; display: flex; align-items: center; gap: 9px; padding-left: 4px; white-space: nowrap; }
.object-list li svg { width: 16px; height: 16px; }
.list-scroll { flex: none; width: 18px; display: flex; flex-direction: column; align-items: center; padding: 9px 0; background: #f0f0f0; }
.list-scroll svg { width: 10px; height: 5px; }
.list-thumb { width: 17px; height: 156px; margin: 7px 0 auto; background: #c1c1c1; }
.outline { width: 1px; height: 180px; margin-top: -28px; border-left: 1px dashed #1d1d6b; }
.mode { display: flex; margin-top: 6px; }
.mode button { height: 30px; flex: 1; border: 1px solid #ccc; border-width: 1px 0; }
.mode .on { background: #666; color: #fff; font-weight: 600; border-color: #666; border-radius: 2px 0 0 2px; }
.show-title { display: flex; align-items: center; gap: 7px; margin: 10px 0 0 8px; }
.show-title input { appearance: none; width: 18px; height: 18px; margin: 0; border: 1px solid #555; border-radius: 1px; background: #fff; }

/* Workspace */
.workspace {
  flex: 1;
  min-width: 0;
  display: grid;
  grid-template-columns: 1fr 21px;
  grid-template-rows: 1fr 22px;
}
.canvas {
  display: grid;
  grid-template-columns: 861fr 775fr;
  overflow: hidden;
  background: #000;
  font-family: "Noto Sans", sans-serif;
}
.canvas h2 { font-size: 25px; line-height: 36px; text-align: center; white-space: nowrap; }
.canvas svg text { font-family: "Noto Sans", sans-serif; }
.column.left { padding-left: 8px; }
.column > svg, .age-box svg, .chart { width: 100%; height: auto; }
.map-title { height: 70px; padding-top: 20px; color: #b3121d; }
.line-title { height: 53px; padding-top: 3px; color: #00a000; }
.map-title, .line-title { padding-right: 2px; }
.countries text { font-size: 16px; fill: #8c8c8c; text-anchor: middle; }
.countries text[text-anchor="end"] { text-anchor: end; }
.countries .faint { fill: #d8caca; }
.state-names text { font-size: 13px; font-weight: 700; fill: #fff; text-anchor: middle; }
.map-legend text { font-size: 16px; fill: #ccc; }
.canvas .credit { font-family: "Liberation Sans", Arial, sans-serif; font-size: 14px; fill: #eee; }
.borders { fill: none; stroke: #585858; stroke-width: 5; stroke-linejoin: round; }
.borders .province { stroke: #303030; stroke-width: 4; }
.states { stroke: #151515; stroke-width: 3; stroke-linejoin: round; }
.isles { fill: none; stroke: #999; stroke-width: 4; stroke-dasharray: 6 4; }

.frame, .grid, .ticks, .minor, .thin, .zero { fill: none; stroke: #ccc; }
.frame .two, .grid, .ticks { stroke-width: 2; }
.grid, .ticks, .minor, .thin { stroke: #eee; }
.zero { stroke: #aaa; stroke-dasharray: 2 1; }
.series { fill: none; stroke-width: 4; stroke-linejoin: round; stroke-linecap: round; }
.axis text { font-size: 15px; fill: #5c5c5c; }
.axis.end text { text-anchor: end; }
.axis.mid text { text-anchor: middle; }
.axis.dim text { fill: #333; }

.age-title { height: 75px; padding: 26px 0 0 183px; color: #f4f4f4; }
.age-box { margin-left: 36px; border: 1px solid #ddd; border-width: 2px 0 1px 1px; }
.slices text { font-size: 21px; fill: #f4f4f4; text-anchor: middle; }
.dose { display: flex; padding-right: 24px; }
.legend { flex: none; width: 161px; padding: 150px 0 0 9px; font-size: 15px; line-height: 20px; color: #ccc; }
.legend h3 { font-size: 15px; line-height: 24px; white-space: nowrap; }
.legend p { display: flex; align-items: center; height: 25px; gap: 6px; }
.legend i { width: 17px; height: 17px; margin-left: 4px; }
.green { background: #0f0; }
.red { background: #f00; }
.dose-chart { flex: 1; }
.dose-title { height: 78px; padding-top: 29px; color: #00a800; }

.vscroll { background: #efefef; padding: 21px 7px 0 8px; }
.vthumb { height: 445px; background: #858585; }
.hscroll { background: #efefef; padding: 8px 0 0 21px; }
.hthumb { width: 78%; height: 7px; background: #858585; }
.corner { background: #f5f5f5; }

/* Sheet tabs */
.tabs {
  flex: none;
  height: 37px;
  display: flex;
  background: #e5e5e5;
  border-bottom: 1px solid #ccc;
  font-size: 15px;
  color: #555;
}
.tabs button { display: flex; align-items: center; padding: 0 9px 0 7px; border-right: 1px solid #c0c0c0; }
.tabs .source { width: 164px; padding-left: 12px; gap: 7px; }
.tabs .source svg { width: 11px; height: 16px; }
.tabs .icon { gap: 6px; padding: 0 9px; }
.tabs .on { background: #fafafa; font-weight: 600; }
.tabs svg { width: 15px; height: 16px; fill: none; stroke: #666; stroke-width: 1.500; }
.tabs .add { width: 40px; justify-content: center; padding: 0; }
.tabs .add svg { width: 20px; height: 20px; margin-top: 4px; }
.tabs .bold { stroke-width: 2.500; }

/* Status bar */
.status {
  flex: none;
  height: 26px;
  display: flex;
  justify-content: flex-end;
  background: #eaeaea;
  border-bottom: 1px solid #aab0bb;
}
.status > * { border-left: 1px solid #c8c8c8; }
.s1 { width: 158px; }
.s2 { width: 34px; }
.s3 { width: 58px; }
.pager { width: 89px; display: flex; align-items: center; justify-content: center; gap: 12px; }
.pager svg { width: 8px; height: 10px; fill: #bbb; }
.views { width: 85px; display: flex; align-items: center; gap: 12px; padding-left: 11px; }
.views svg { width: 14px; height: 14px; }

/* Taskbar */
.taskbar {
  flex: none;
  height: 60px;
  display: grid;
  grid-template-columns: 1fr auto 1fr;
  align-items: center;
  background: linear-gradient(90deg, #e2eef8 0, #e2eef8 25%, #d4e3f9 33%, #dadcf1 42%, #d5e2f8 55%, #dadcef 70%, #e1edf8 78%, #e1edf8);
  font-family: "Noto Sans", sans-serif;
}
.widgets { justify-self: start; margin-left: 12px; }
.widgets svg { width: 30px; height: 28px; }
.apps { display: flex; align-items: center; gap: 8px; }
.apps button { width: 48px; height: 48px; display: flex; justify-content: center; align-items: center; position: relative; }
.apps button svg { width: 30px; height: 30px; }
.apps .running::after, .apps .active::after {
  content: "";
  position: absolute;
  bottom: 0;
  width: 8px;
  height: 4px;
  border-radius: 2px;
  background: #7c828c;
}
.apps .active { background: #edf1fa; border-radius: 5px; }
.apps .active::after { width: 20px; background: #0078d4; }
.search {
  width: 273px;
  height: 38px;
  margin-right: -4px;
  display: flex;
  align-items: center;
  gap: 13px;
  padding-left: 12px;
  border: 1px solid #cdd5e6;
  border-radius: 19px;
  background: #f2f6fd;
}
.search .lens { width: 19px; height: 19px; fill: none; stroke: #222; stroke-width: 2; }
.search input { flex: 1; min-width: 0; border: 0; padding: 0; background: none; font: 16px/22px "Noto Sans", sans-serif; }
.search input::placeholder { color: #555; opacity: 1; }
.search .art { width: 68px; height: 34px; }
.tray { justify-self: end; display: flex; align-items: center; padding-right: 25px; font-size: 15px; line-height: 20px; color: #222; }
.chev { width: 14px; height: 8px; fill: none; stroke: #222; stroke-width: 1.500; }
.lang { width: 80px; text-align: center; }
.tray-icons { display: flex; gap: 10px; margin-right: 18px; }
.tray-icons svg { width: 20px; height: 16px; fill: none; stroke: #222; stroke-width: 1.500; }
.clock { text-align: right; }
.badge { width: 20px; height: 20px; margin-left: 10px; border-radius: 50%; background: #0067c0; color: #fff; font-size: 12px; text-align: center; }
```
